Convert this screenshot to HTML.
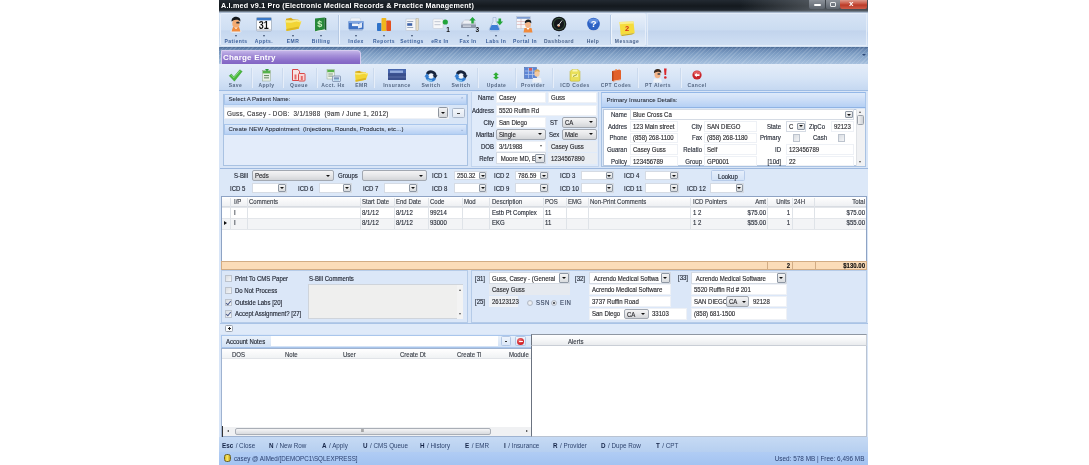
<!DOCTYPE html>
<html>
<head>
<meta charset="utf-8">
<title>A.I.med v9.1 Pro</title>
<style>
*{box-sizing:border-box;margin:0;padding:0}
html,body{width:1089px;height:465px;overflow:hidden;background:#fff}
body{font-family:"Liberation Sans",sans-serif;font-size:6px;color:#222;position:relative;line-height:1}
.a{position:absolute}
.t{position:absolute;white-space:nowrap;line-height:7px;height:7px;color:#2a2f3a;-webkit-text-stroke:.15px;font-size:6.7px;transform:scaleX(.9);transform-origin:0 50%}
.r{text-align:right}
.t.r{transform-origin:100% 50%}
#app{will-change:transform;-webkit-font-smoothing:antialiased;position:absolute;left:219px;top:0;width:649.3px;height:465px;background:#cfdff3;overflow:hidden}
/* title */
#title{left:0;top:0;width:650px;height:12px;border-bottom:1.2px solid #6f7b88;background:linear-gradient(90deg,rgba(0,0,0,0) 80%,rgba(130,136,142,.5) 92%,rgba(120,126,132,.45)),linear-gradient(#232a32,#14191e 55%,#1c232a 88%,#3a4149)}
#title .tt{left:2px;top:1px;color:#fff;font-weight:bold;font-size:7.2px;line-height:9px;height:9px;letter-spacing:.2px;transform:none;-webkit-text-stroke:0}
.wb{position:absolute;top:0;height:9px;border-radius:0 0 2px 2px}
/* main toolbar */
#tb1{left:0;top:12px;width:650px;height:35px;background:linear-gradient(#d9e6f6,#cbdcf1 55%,#c4d6ee 60%,#d3e2f4)}
.lab{position:absolute;white-space:nowrap;font-size:5px;line-height:6px;color:#3b5f9a;font-weight:bold;letter-spacing:.45px;transform:translateX(-50%)}
.lab2{color:#4a638c}
.ic{position:absolute}
.dd{position:absolute;width:0;height:0;border-left:1.8px solid transparent;border-right:1.8px solid transparent;border-top:2.1px solid #3a4c6c;transform:translateX(-50%)}
/* strip */
#strip{left:0;top:46.5px;width:650px;height:17.5px;background:repeating-linear-gradient(135deg,rgba(255,255,255,.13) 0,rgba(255,255,255,.13) 1px,rgba(0,0,0,0) 1px,rgba(0,0,0,0) 3px),linear-gradient(#4a6992,#6888b2 12%,#7e9ec4 40%,#94b1d3 75%,#a7c1de)}
#tab{left:2px;top:50px;width:140px;height:14px;border-radius:1px 4px 0 0;background:linear-gradient(#c2b3e8,#a58fd8 35%,#8b6fca 75%,#8265c3);border:1px solid #d6cbef;border-bottom:none}
#tab span{position:absolute;left:1px;top:1.6px;color:#fff;font-weight:bold;font-size:8px;line-height:10px;letter-spacing:.2px}
/* toolbar 2 */
#tb2{left:0;top:64px;width:650px;height:27px;background:linear-gradient(#e4edf9,#d6e4f6 55%,#c5d8f1);border-bottom:1px solid #9ebce4}
.l2{color:#566883}
.sp{position:absolute;top:4px;width:1px;height:20px;background:#cbdaee;box-shadow:1px 0 0 #e6eef9}
/* panels */
.pn{position:absolute;background:#d9e6f7;border:1px solid #a9c2e2}
.hd{position:absolute;background:linear-gradient(#deeafa,#cbddf7 50%,#b5d0f4);border:1px solid #a9c6ec}
.hdt{font-size:6.05px;transform:none;color:#1c212c;-webkit-text-stroke:.06px}
.in{position:absolute;background:#fff;border:1px solid #eef1f6;height:9px}
.in span,.cb span{position:absolute;left:2px;top:1px;bottom:0;margin:auto 0;height:8px;line-height:8px;white-space:nowrap;color:#2c2c30;-webkit-text-stroke:.15px;font-size:6.7px;transform:scaleX(.9);transform-origin:0 50%}
.cb{position:absolute;background:#fff;border:1px solid #d5dbe4;height:9px}
.cb i{position:absolute;right:0;top:0;bottom:0;margin:auto 0;width:7.5px;height:7.5px;background:linear-gradient(#f4f4f4,#d9dcdf);border:1px solid #8e97a3;border-radius:1px}
.cb i:after{content:"";position:absolute;left:.7px;top:1.7px;border-left:2px solid transparent;border-right:2px solid transparent;border-top:2.4px solid #111}
.cb.big i{width:9.6px;height:9.3px}
.cb.big i:after{left:1.6px;top:2.5px;border-left-width:2.200px;border-right-width:2.200px;border-top-width:2.600px}
.gcb{background:linear-gradient(#f4f4f5,#e6e7e9 50%,#d3d5d8);border:1px solid #a2a8b1;border-radius:2px}
.gcb i:after{top:2.6px}
.gcb i{background:none;border:none}
.ck{position:absolute;width:7.4px;height:7.4px;background:linear-gradient(135deg,#d9dde2,#f4f5f7);border:1px solid #bcc3cd}

.dk{color:#1f2430}
.gh{color:#3a3f48}
.btn{background:linear-gradient(#f6f8fb,#dfe5ee);border:1px solid #93a4bd;border-radius:1.5px}
.btn .arr{position:absolute;left:2.6px;top:3px;border-left:1.6px solid transparent;border-right:1.6px solid transparent;border-top:2px solid #222}
.btn .dash{position:absolute;left:4px;top:3.6px;width:3.5px;height:.9px;background:#444}
.tri{width:0;height:0;border-left:1.9px solid transparent;border-right:1.9px solid transparent;border-top:2.3px solid #555}
.tru{width:0;height:0;border-left:1.9px solid transparent;border-right:1.9px solid transparent;border-bottom:2.3px solid #555}
.ck.on:after{content:"";position:absolute;left:1.2px;top:.2px;width:2px;height:3.6px;border-right:1px solid #4a5a8a;border-bottom:1px solid #4a5a8a;transform:rotate(40deg)}
.rd{position:absolute;width:6.5px;height:6.5px;border-radius:50%;background:radial-gradient(#f4f5f7,#d9dde3);border:1px solid #b4bbc6}
.rd.on:after{content:"";position:absolute;left:1.2px;top:1.2px;width:2.2px;height:2.2px;border-radius:50%;background:#2a2f3a}
.sk{position:absolute;white-space:nowrap;top:5.4px;line-height:7px;font-size:6.7px;transform:scaleX(.94);transform-origin:0 50%;color:#2f446e}
.sk b{color:#152447;margin-right:2.6px}
</style>
</head>
<body>
<div id="app">
<!-- TITLE BAR -->
<div id="title" class="a">
  <div class="t tt">A.I.med v9.1 Pro (Electronic Medical Records &amp; Practice Management)</div>
  <div class="wb" style="left:590px;width:16px;background:linear-gradient(#8b9199,#5d646d)"><div class="a" style="left:5px;top:4px;width:7px;height:2px;background:#fff;border-radius:1px"></div></div>
  <div class="wb" style="left:606px;width:15px;background:linear-gradient(#8b9199,#5d646d);border-left:1px solid #3e444b"><div class="a" style="left:4px;top:2px;width:6px;height:5px;border:1.4px solid #e8eaec;border-radius:1px"></div></div>
  <div class="wb" style="left:621px;width:27px;background:linear-gradient(#dc9a8c,#c8513e 45%,#b93a28 55%,#cf5d49)"><div class="a" style="left:9px;top:-1px;color:#fff;font-weight:bold;font-size:8px;line-height:10px">x</div></div>
</div>
<!-- MAIN TOOLBAR -->
<div id="tb1" class="a">
  <div class="a" style="left:0;top:0;width:650px;height:1.2px;background:#a9b8cd;z-index:2"></div>
  <div class="a" style="left:1px;top:1px;width:426px;height:33px;border:1px solid #e6eefa;border-radius:2px;background:linear-gradient(#dbe7f7,#cfdff3 50%,#c5d7ef 55%,#d2e1f4)"></div>
  <div class="a" style="left:428px;top:1px;width:220px;height:33px;border:1px solid #e3ecf8;background:linear-gradient(#d6e3f5,#cbdcf1 50%,#c2d4ed 55%,#cfdff3)"></div>
  <div class="a" style="left:119px;top:3px;width:1px;height:29px;background:#b5c9e4;box-shadow:1px 0 0 #eef4fc"></div>
  <div class="a" style="left:391px;top:3px;width:1px;height:29px;background:#b5c9e4;box-shadow:1px 0 0 #eef4fc"></div>
  <!-- Patients -->
  <svg class="ic" style="left:9px;top:4px" width="16" height="17" viewBox="0 0 16 17"><ellipse cx="8" cy="15.2" rx="5.5" ry="1.6" fill="#e9eef5"/><path d="M5 11h6l1.5 4.5h-9z" fill="#f08a3c"/><path d="M6.2 11l1.8 2.2L9.8 11z" fill="#fff"/><ellipse cx="8" cy="7.400" rx="3.700" ry="4.400" fill="#f3ab72"/><path d="M3.6 5.6C3.2 2 6 .6 8.4.8c2.6.2 4.4 1.800 4 4.600-1.400-1.400-3-1.800-4.400-1.600C6.400 4 4.600 4.600 3.600 5.600z" fill="#15181c"/><rect x="8.300" y="5.800" width="3.200" height="1.600" rx=".5" fill="#2a2e36"/></svg>
  <div class="dd" style="left:17px;top:22.9px"></div><div class="lab" style="left:17px;top:26px">Patients</div>
  <!-- Appts -->
  <svg class="ic" style="left:37px;top:5px" width="16" height="15" viewBox="0 0 16 15"><rect x=".5" y=".5" width="15" height="13.500" rx="1" fill="#fdfdfd" stroke="#8c98aa" stroke-width=".6"/><rect x=".8" y=".8" width="14.400" height="2.600" fill="#3b79c8"/><rect x=".8" y="12.200" width="14.400" height="1.500" fill="#c9ced6"/><text x="7.800" y="11.800" font-family="Liberation Sans" font-weight="bold" font-size="10.500" text-anchor="middle" fill="#111" textLength="10" lengthAdjust="spacingAndGlyphs">31</text></svg>
  <div class="dd" style="left:45px;top:22.9px"></div><div class="lab" style="left:45px;top:26px">Appts.</div>
  <!-- EMR -->
  <svg class="ic" style="left:66px;top:5px" width="17" height="15" viewBox="0 0 17 15"><path d="M1 1.800l5-1 2 1.400 5.500.6v3H1z" fill="#d9ab1c"/><path d="M.6 3.200l6 .3 5.500-.8 4.300 1.700-2.600 7.300L1.500 14z" fill="#f2d535"/><path d="M.6 3.200l6 .3 5.500-.8 4.300 1.700-.8 1.200-4-1-5.500 1.200-5.300-.3z" fill="#f8ea80"/><path d="M1.300 12l12.500-2.600-.1 2.300L1.500 14z" fill="#dcb622"/></svg>
  <div class="dd" style="left:74px;top:22.9px"></div><div class="lab" style="left:74px;top:26px">EMR</div>
  <!-- Billing -->
  <svg class="ic" style="left:94px;top:5px" width="15" height="15" viewBox="0 0 15 15"><path d="M2 1.500l9.500-1v12l-9.500 1.800z" fill="#27883a"/><path d="M11.500.5l1.800.8v12l-1.800-.8z" fill="#185a25"/><path d="M2 14.300l9.500-1.800 1.800.8-9.700 1.500z" fill="#e9efe9"/><text x="6.800" y="10.300" font-family="Liberation Sans" font-weight="bold" font-size="9" text-anchor="middle" fill="#c6f0bd">$</text></svg>
  <div class="dd" style="left:102px;top:22.9px"></div><div class="lab" style="left:102px;top:26px">Billing</div>
  <!-- Index -->
  <svg class="ic" style="left:128px;top:5px" width="18" height="15" viewBox="0 0 18 15"><path d="M4 1h9l1 3H3z" fill="#eef2f8" stroke="#b9c4d4" stroke-width=".4"/><rect x="1.500" y="4" width="15" height="8.500" rx="1" fill="#3f72c4"/><rect x="1.500" y="4" width="15" height="2" fill="#7fa5e0"/><rect x="5" y="6.500" width="6" height="2.600" fill="#f3f6fb"/><path d="M11 7l4-1.500v5l-4 1z" fill="#dfe8f6"/><rect x="2.500" y="12.500" width="13" height="1.200" fill="#9fb4d4"/></svg>
  <div class="dd" style="left:137px;top:22.9px"></div><div class="lab" style="left:137px;top:26px">Index</div>
  <!-- Reports -->
  <svg class="ic" style="left:157px;top:4px" width="16" height="16" viewBox="0 0 16 16"><rect x="1" y="7" width="4.500" height="8" rx=".8" fill="#2f73c9"/><rect x="5.500" y="2" width="4.800" height="13" rx=".8" fill="#f0b61c"/><rect x="10.300" y="4.500" width="4.700" height="10.500" rx=".8" fill="#e4511f"/></svg>
  <div class="dd" style="left:165px;top:22.9px"></div><div class="lab" style="left:165px;top:26px">Reports</div>
  <!-- Settings -->
  <svg class="ic" style="left:185px;top:5px" width="16" height="15" viewBox="0 0 16 15"><rect x="2" y="2" width="10" height="11.500" fill="#f4f6f9" stroke="#b1bac8" stroke-width=".5"/><rect x="3.200" y="4" width="6" height="1" fill="#9aa8bd"/><rect x="3.200" y="6.200" width="5" height="2.600" fill="#3d62a8"/><rect x="3.200" y="10" width="6" height="1" fill="#9aa8bd"/><path d="M12 1.500h2.500v11l-1.200 1.500-1.300-1.500z" fill="#e8dfc9" stroke="#a59c86" stroke-width=".4"/></svg>
  <div class="dd" style="left:193px;top:22.9px"></div><div class="lab" style="left:193px;top:26px">Settings</div>
  <!-- eRx In -->
  <svg class="ic" style="left:212px;top:5px" width="20" height="16" viewBox="0 0 20 16"><rect x="2" y="2" width="10" height="9.500" rx="1" fill="#f6f7f9" stroke="#bcc3cf" stroke-width=".5"/><rect x="3.500" y="4" width="6" height="1.200" fill="#c9ced8"/><rect x="3.500" y="7" width="6" height="1.200" fill="#c9ced8"/><circle cx="14.300" cy="5" r="2.600" fill="#22a53a"/><text x="17" y="15" font-family="Liberation Sans" font-weight="bold" font-size="6.500" text-anchor="middle" fill="#111">1</text></svg>
  <div class="lab" style="left:221px;top:26px">eRx In</div>
  <!-- Fax In -->
  <svg class="ic" style="left:240px;top:4px" width="21" height="17" viewBox="0 0 21 17"><path d="M2 7l4-3.500h8l3 3.500v4.500H2z" fill="#c4cad6"/><path d="M5 4.500h8l1.500 3H3.800z" fill="#eef0f5"/><rect x="2" y="8.500" width="15" height="3.600" rx=".8" fill="#8e98ab"/><rect x="4" y="9.500" width="8" height="1.200" fill="#dfe3eb"/><path d="M13.500 1l3.200 3.600h-2v3h-2.400v-3h-2z" fill="#22a53a"/><text x="18.300" y="16.300" font-family="Liberation Sans" font-weight="bold" font-size="6.500" text-anchor="middle" fill="#111">3</text></svg>
  <div class="dd" style="left:249px;top:22.9px"></div><div class="lab" style="left:249px;top:26px">Fax In</div>
  <!-- Labs In -->
  <svg class="ic" style="left:268px;top:4px" width="18" height="17" viewBox="0 0 18 17"><path d="M6 1.500h3v4l3.600 7.300c.5 1.200-.2 2.200-1.500 2.200H3.900c-1.300 0-2-1-1.500-2.200L6 5.500z" fill="#dfe9f8" stroke="#8fa6cb" stroke-width=".5"/><path d="M4.600 9h5.800l1.800 3.800c.3.800-.1 1.400-.9 1.400H3.700c-.8 0-1.200-.6-.9-1.400z" fill="#3f7fd6"/><path d="M11.500 2.500h2.600v3h2l-3.300 3.800-3.300-3.800h2z" fill="#22a53a"/></svg>
  <div class="dd" style="left:277px;top:22.9px"></div><div class="lab" style="left:277px;top:26px">Labs In</div>
  <!-- Portal In -->
  <svg class="ic" style="left:297px;top:4px" width="18" height="17" viewBox="0 0 18 17"><rect x=".5" y=".5" width="14" height="12" fill="#f4f6fa" stroke="#b6c0d0" stroke-width=".5"/><rect x=".8" y=".8" width="13.400" height="2" fill="#7d9cd2"/><path d="M.8 5.500h13.400M.8 8.500h13.400M5 3v9.500" stroke="#d89a9a" stroke-width=".5"/><path d="M8.500 12h7l1 4.500h-9z" fill="#f08a3c"/><path d="M10.500 12l1.500 2 1.500-2z" fill="#fff"/><ellipse cx="12" cy="8.600" rx="2.900" ry="3.500" fill="#f3b488"/><path d="M8.800 7.400c-.3-3 1.800-4 3.600-3.900 2 .1 3.200 1.500 2.900 3.700-1-1-2.200-1.400-3.200-1.300-1.200.1-2.500.7-3.300 1.500z" fill="#15181c"/></svg>
  <div class="dd" style="left:306px;top:22.9px"></div><div class="lab" style="left:306px;top:26px">Portal In</div>
  <!-- Dashboard -->
  <svg class="ic" style="left:332px;top:4px" width="16" height="16" viewBox="0 0 16 16"><circle cx="8" cy="8" r="7.300" fill="#14171a"/><circle cx="8" cy="8" r="5.600" fill="none" stroke="#3a5a3e" stroke-width=".9"/><path d="M8 8.500l3-4" stroke="#e9e9e9" stroke-width=".9"/><circle cx="7.600" cy="9.300" r="1.300" fill="#e8e2da"/><circle cx="7.800" cy="10.200" r=".7" fill="#e0662a"/></svg>
  <div class="dd" style="left:340px;top:22.9px"></div><div class="lab lab2" style="left:340px;top:26px">Dashboard</div>
  <!-- Help -->
  <svg class="ic" style="left:367px;top:5px" width="15" height="15" viewBox="0 0 15 15"><ellipse cx="7.500" cy="13.200" rx="5" ry="1.200" fill="#c9d6ea"/><circle cx="7.500" cy="7" r="6.300" fill="#2f63c4"/><ellipse cx="7.500" cy="4.300" rx="4.600" ry="2.800" fill="#6f9ae6" opacity=".8"/><text x="7.600" y="10.400" font-family="Liberation Sans" font-weight="bold" font-size="9.500" text-anchor="middle" fill="#fff">?</text></svg>
  <div class="lab lab2" style="left:374px;top:26px">Help</div>
  <!-- Message -->
  <div class="a" style="left:393px;top:2px;width:33px;height:31px;background:linear-gradient(rgba(255,255,255,.35),rgba(255,255,255,.12) 50%,rgba(255,255,255,.3))"></div><svg class="ic" style="left:399px;top:8.5px" width="18" height="16" viewBox="0 0 18 16"><path d="M1.500 1l14-.5 1.200 11.500-14 2z" fill="#f5dc3c"/><path d="M1.500 1l14-.5.200 2L1.700 3.300z" fill="#fbee8a"/><path d="M2.700 14l14-2-2.500 1.500-10 1.500z" fill="#c9a91a"/><text x="9" y="10" font-family="Liberation Sans" font-weight="bold" font-size="7.500" text-anchor="middle" fill="#d42a1a">2</text></svg>
  <div class="lab lab2" style="left:408px;top:26px">Message</div>
</div>
<!-- STRIP + TAB -->
<div id="strip" class="a"></div>
<div id="tab" class="a"><span>Charge Entry</span></div>
<div class="a" style="left:642.5px;top:53.5px;width:0;height:0;border-left:2px solid transparent;border-right:2px solid transparent;border-top:2px solid #2f4a7a"></div>
<!-- TOOLBAR 2 -->
<div id="tb2" class="a">
  <div class="sp" style="left:32px"></div><div class="sp" style="left:63px"></div><div class="sp" style="left:97px"></div><div class="sp" style="left:154px"></div><div class="sp" style="left:258px"></div><div class="sp" style="left:296px"></div><div class="sp" style="left:333px"></div><div class="sp" style="left:418px"></div><div class="sp" style="left:461px"></div>
  <!-- Save -->
  <svg class="ic" style="left:9px;top:5px" width="15" height="13" viewBox="0 0 15 13"><path d="M1.200 6.800l2.200-1.800 2.400 2.800L11.800.8l2.400 1.600-7.800 9.800z" fill="#49b83c" stroke="#2f9428" stroke-width=".4"/><path d="M3.300 6l2.500 2.700L11.900 1.800" stroke="#a5e79c" stroke-width=".7" fill="none"/></svg>
  <div class="lab l2" style="left:16.500px;top:18px">Save</div>
  <!-- Apply -->
  <svg class="ic" style="left:41px;top:4px" width="13" height="14" viewBox="0 0 13 14"><rect x="2.500" y="2.500" width="8" height="10.500" fill="#e9efe6" stroke="#8fa58a" stroke-width=".5"/><rect x="2.800" y="2.800" width="7.400" height="2.600" fill="#57b24a"/><rect x="4" y="7" width="5" height="1.100" fill="#6c8f66"/><rect x="4" y="9.300" width="5" height="1.100" fill="#6c8f66"/><path d="M5 1l2 2.500L9 1z" fill="#2f9a3c"/></svg>
  <div class="lab l2" style="left:47.500px;top:18px">Apply</div>
  <!-- Queue -->
  <svg class="ic" style="left:72px;top:4px" width="16" height="14" viewBox="0 0 16 14"><path d="M1.500 1.500h5.500l1.500 1.800v9.200h-7z" fill="#f7e4e4" stroke="#d94848" stroke-width="1"/><rect x="7.500" y="5.500" width="6.500" height="7.500" rx=".8" fill="#f7d6d6" stroke="#d94848" stroke-width="1"/><rect x="3.500" y="6.500" width="2" height="5" fill="#e46a6a"/><rect x="9.800" y="8" width="2" height="4" fill="#e46a6a"/></svg>
  <div class="lab l2" style="left:80px;top:18px">Queue</div>
  <!-- Acct Hx -->
  <svg class="ic" style="left:106px;top:4px" width="17" height="15" viewBox="0 0 17 15"><rect x="2" y="1.500" width="7.500" height="9.500" fill="#eef3ec" stroke="#93a78f" stroke-width=".5"/><rect x="2.300" y="1.800" width="6.900" height="2.400" fill="#57b24a"/><rect x="3.300" y="5.500" width="4.600" height="1" fill="#809a7b"/><rect x="3.300" y="7.600" width="4.600" height="1" fill="#809a7b"/><rect x="7.500" y="8" width="8" height="5.500" rx=".6" fill="#d7e2f2" stroke="#5f7599" stroke-width=".6"/><rect x="9" y="9.600" width="5" height="1" fill="#3f5f96"/><rect x="9" y="11.300" width="5" height="1" fill="#7fb9d9"/></svg>
  <div class="lab l2" style="left:114px;top:18px">Acct. Hx</div>
  <!-- EMR -->
  <svg class="ic" style="left:135px;top:5.500px" width="15" height="12.500" viewBox="0 0 17 15"><path d="M1 1.800l5-1 2 1.400 5.500.6v3H1z" fill="#d9ab1c"/><path d="M.6 3.200l6 .3 5.500-.8 4.300 1.700-2.600 7.300L1.500 14z" fill="#f2d535"/><path d="M.6 3.200l6 .3 5.500-.8 4.300 1.700-.8 1.200-4-1-5.500 1.200-5.300-.3z" fill="#f8ea80"/><path d="M1.300 12l12.500-2.600-.1 2.300L1.500 14z" fill="#dcb622"/></svg>
  <div class="lab l2" style="left:142.500px;top:18px">EMR</div>
  <!-- Insurance -->
  <svg class="ic" style="left:169px;top:5px" width="18" height="11" viewBox="0 0 18 11"><rect x="0" y="0" width="18" height="11" rx=".6" fill="#3a4f8c"/><rect x="0" y="0" width="18" height="4.200" fill="#4766ad"/><rect x="2" y="1.500" width="13" height="2.400" fill="#9fb6e3" opacity=".9"/><rect x="0" y="7.500" width="18" height="1" fill="#5b6fa6"/></svg>
  <div class="lab l2" style="left:178px;top:18px">Insurance</div>
  <!-- Switch x2 -->
  <svg class="ic" style="left:205px;top:4.5px" width="14" height="14" viewBox="0 0 14 14"><circle cx="7" cy="7" r="2.2" fill="#f4f7fb"/><path d="M3.2 5.200A4.200 4.200 0 0 1 11.200 6.800" fill="none" stroke="#16233c" stroke-width="2.800"/><path d="M8.600 6.300h5l-2.500 3.500z" fill="#16233c"/><path d="M10.800 8.800A4.200 4.200 0 0 1 2.800 7.200" fill="none" stroke="#2f7bd0" stroke-width="2.800"/><path d="M.4 7.700h5L2.900 4.200z" fill="#2f7bd0"/><path d="M3.500 10.500A4.200 4.200 0 0 0 8 11.600" fill="none" stroke="#7cc0ee" stroke-width="1.600"/></svg>
  <div class="lab l2" style="left:212px;top:18px">Switch</div>
  <svg class="ic" style="left:234.5px;top:4.5px" width="14" height="14" viewBox="0 0 14 14"><circle cx="7" cy="7" r="2.2" fill="#f4f7fb"/><path d="M3.2 5.200A4.200 4.200 0 0 1 11.200 6.800" fill="none" stroke="#16233c" stroke-width="2.800"/><path d="M8.600 6.300h5l-2.500 3.500z" fill="#16233c"/><path d="M10.800 8.800A4.200 4.200 0 0 1 2.800 7.200" fill="none" stroke="#2f7bd0" stroke-width="2.800"/><path d="M.4 7.700h5L2.900 4.200z" fill="#2f7bd0"/><path d="M3.500 10.500A4.200 4.200 0 0 0 8 11.600" fill="none" stroke="#7cc0ee" stroke-width="1.600"/></svg>
  <div class="lab l2" style="left:242px;top:18px">Switch</div>
  <!-- Update -->
  <svg class="ic" style="left:273.400px;top:7.500px" width="8" height="8" viewBox="0 0 11 11"><path d="M5.500.5l4 3.600H7.200v2.800h2.300l-4 3.600-4-3.600h2.300V4.100H1.500z" fill="#2fae35"/></svg>
  <div class="lab l2" style="left:277.500px;top:18px">Update</div>
  <!-- Provider -->
  <svg class="ic" style="left:305px;top:3px" width="18" height="16" viewBox="0 0 18 16"><rect x=".5" y=".5" width="12" height="11" fill="#5d86d6" stroke="#3c5fa6" stroke-width=".5"/><path d="M.8 4h11.400M.8 7.500h11.400M4.500.8v10.400M8.500.8v10.400" stroke="#b9ccef" stroke-width=".7"/><rect x="5" y="1" width="3" height="2.600" fill="#d35a5a"/><ellipse cx="13" cy="6.500" rx="2.600" ry="3.200" fill="#f3c9a0"/><path d="M9 11h8l.8 4.500h-9.600z" fill="#eef1f6"/><path d="M10.400 5.500c0-2.600 1.600-3.300 3-3.200 1.500.1 2.600 1.200 2.300 3-.8-.8-1.800-1.100-2.600-1-1 .1-2 .6-2.700 1.200z" fill="#d9a85c"/></svg>
  <div class="lab l2" style="left:314px;top:18px">Provider</div>
  <!-- ICD -->
  <svg class="ic" style="left:349px;top:4px" width="14" height="14" viewBox="0 0 14 14"><path d="M2 3.500l2-2h6l2 2v8.500c0 .8-.5 1.200-1.200 1.200H3.200c-.7 0-1.200-.4-1.200-1.200z" fill="#e9e05a" stroke="#b9ad2a" stroke-width=".5"/><path d="M4.500 1.500h5v2h-5z" fill="#fbf6b0"/><rect x="4" y="6" width="6" height="3" fill="#f8f3a0"/><path d="M5 8.500l4-2" stroke="#7f8a2a" stroke-width=".8"/></svg>
  <div class="lab l2" style="left:356px;top:18px">ICD Codes</div>
  <!-- CPT -->
  <svg class="ic" style="left:391px;top:4px" width="13" height="14" viewBox="0 0 13 14"><path d="M2 3l7.500-1.500 1.500 1v9.500l-7.500 1.500-1.500-1z" fill="#e2602a"/><path d="M2 3l1.500 1v9.500l-1.500-1z" fill="#b94418"/><path d="M5 1l2 .3-.5 2z" fill="#f08a3c"/><path d="M3.500 13.500l7.500-1.500-.3-.6-7.200 1.400z" fill="#f5e9e0"/></svg>
  <div class="lab l2" style="left:397px;top:18px">CPT Codes</div>
  <!-- PT Alerts -->
  <svg class="ic" style="left:432px;top:3px" width="18" height="16" viewBox="0 0 18 16"><path d="M3 11.500h7l1 4H2z" fill="#eef1f6"/><ellipse cx="6.500" cy="7.500" rx="3" ry="3.800" fill="#f3b488"/><path d="M3 6.300c-.3-3.300 2-4.300 4-4.200 2.200.1 3.600 1.600 3.300 4-1.200-1.100-2.500-1.500-3.700-1.400-1.300.1-2.700.7-3.600 1.600z" fill="#3a2a1e"/><rect x="6.500" y="6.300" width="2.800" height="1.400" rx=".4" fill="#3a3e46"/><path d="M13 1.500h2.600l-.5 6.500h-1.600z" fill="#d9262a"/><circle cx="14.300" cy="10.500" r="1.300" fill="#d9262a"/></svg>
  <div class="lab l2" style="left:439px;top:18px">PT Alerts</div>
  <!-- Cancel -->
  <svg class="ic" style="left:473px;top:6.400px" width="10" height="10" viewBox="0 0 13 13"><circle cx="6.500" cy="6.500" r="6" fill="#c8242a"/><ellipse cx="6.500" cy="4" rx="4.500" ry="2.600" fill="#e8696c" opacity=".8"/><path d="M3 6.600l3.200-2.800v1.700h3.600v2.300H6.200v1.700z" fill="#fff"/></svg>
  <div class="lab l2" style="left:478px;top:18px">Cancel</div>
</div>
<!-- BODY -->
<div id="body">
<div class="a " style="left:0px;top:91px;width:650px;height:346px;background:#d8e5f7"></div>
<div class="a pn" style="left:3.5px;top:93.5px;width:245px;height:72.5px;"></div>
<div class="a hd" style="left:4.5px;top:93.8px;width:243px;height:11.4px;"></div>
<div class="t hdt" style="left:9.5px;top:96.3px;">Select A Patient Name:</div>
<div class="t " style="left:241px;top:96.3px;font-size:5px;color:#7f9ac4;transform:none;-webkit-text-stroke:0">&#8963;</div>
<div class="in" style="left:5px;top:106.600px;width:225px;height:12px"><span style="font-size:6.300px;line-height:10px;letter-spacing:.3px;color:#3a3a3e;transform:none">Guss, Casey - DOB:&nbsp; 3/1/1988&nbsp; (9am / June 1, 2012)</span></div>
<div class="a btn" style="left:219.3px;top:107.4px;width:9.5px;height:10.2px;background:linear-gradient(#f3f3f4,#d6d8db);border-color:#8f959e"><b class="arr" style="left:2px;top:3.400px;border-left-width:2.200px;border-right-width:2.200px;border-top-width:2.600px;border-top-color:#111"></b></div>
<div class="a btn" style="left:232.6px;top:107.6px;width:13.4px;height:10px;background:linear-gradient(#f4f7fb,#e1e8f2);border-color:#a9b6c9"><b class="dash" style="left:4.200px;top:4px"></b></div>
<div class="a hd" style="left:4.5px;top:123.6px;width:243px;height:11.2px;"></div>
<div class="t hdt" style="left:9.5px;top:126px;letter-spacing:.08px">Create NEW Appointment&nbsp; (Injections, Rounds, Products, etc...)</div>
<div class="t " style="left:241px;top:126px;font-size:5px;color:#7f9ac4;transform:none;-webkit-text-stroke:0">&#8964;</div>
<div class="a " style="left:4.5px;top:134.8px;width:243px;height:30.2px;background:#e3ecfa"></div>
<div class="a " style="left:251.5px;top:91.5px;width:128px;height:75px;background:#e0ebfa;border:1px solid #c3d5ee;border-top:none"></div>
<div class="t r dk" style="left:175px;top:94.2px;width:100px;">Name</div>
<div class="t r dk" style="left:175px;top:106.7px;width:100px;">Address</div>
<div class="t r dk" style="left:175px;top:118.8px;width:100px;">City</div>
<div class="t r dk" style="left:175px;top:130.8px;width:100px;">Marital</div>
<div class="t r dk" style="left:175px;top:142.8px;width:100px;">DOB</div>
<div class="t r dk" style="left:175px;top:154.8px;width:100px;">Refer</div>
<div class="in" style="left:277px;top:92px;width:49.6px;height:11.4px;"><span>Casey</span></div>
<div class="in" style="left:329px;top:92px;width:49px;height:11.4px;"><span>Guss</span></div>
<div class="in" style="left:277px;top:104.5px;width:101px;height:11.4px;"><span>5520 Ruffin Rd</span></div>
<div class="in" style="left:277px;top:116.6px;width:49.6px;height:11.4px;"><span>San Diego</span></div>
<div class="t dk" style="left:330.5px;top:118.8px;">ST</div>
<div class="cb gcb" style="left:343px;top:116.9px;width:35px;height:10.8px;"><span>CA</span><i></i></div>
<div class="cb gcb" style="left:277px;top:128.9px;width:49.6px;height:10.8px;"><span>Single</span><i></i></div>
<div class="t dk" style="left:329.5px;top:130.8px;">Sex</div>
<div class="cb gcb" style="left:343px;top:128.9px;width:35px;height:10.8px;"><span>Male</span><i></i></div>
<div class="in" style="left:277px;top:140.6px;width:49.6px;height:11.4px;"><span>3/1/1988</span></div>
<div class="a tri" style="left:321px;top:145.3px"></div>
<div class="in" style="left:329px;top:140.6px;width:49px;height:11.4px;background:#e9edf2;border-color:#e9edf2"><span>Casey Guss</span></div>
<div class="cb big" style="left:277px;top:152.4px;width:49.6px;height:11.8px;"><span>&nbsp;Moore MD, E</span><i></i></div>
<div class="in" style="left:329px;top:152.6px;width:49px;height:11.4px;background:#e9edf2;border-color:#e9edf2"><span>1234567890</span></div>
<div class="a pn" style="left:381.5px;top:91.5px;width:265.5px;height:75px;"></div>
<div class="a hd" style="left:381.5px;top:91.5px;width:265.5px;height:16px;border-top:1.300px solid #94b8e8;border-bottom:1.300px solid #8fb3e4"></div>
<div class="t hdt" style="left:387.5px;top:96.9px;">Primary Insurance Details:</div>
<div class="a " style="left:384px;top:108.5px;width:262px;height:57.5px;background:#fff;border:1px solid #b9c9df"></div>
<div class="a " style="left:637px;top:109px;width:8.5px;height:56.5px;background:#f0f1f3;border-left:1px solid #dfe2e6"></div>
<div class="a " style="left:638px;top:115px;width:6.5px;height:10px;background:linear-gradient(90deg,#f3f3f4,#cfd2d6);border:1px solid #9aa0a8;border-radius:1.5px"></div>
<div class="a tru" style="left:639.7px;top:111px"></div>
<div class="a tri" style="left:639.7px;top:161px"></div>
<div class="t r " style="left:308px;top:111.2px;width:100px;">Name</div>
<div class="t r " style="left:308px;top:122.8px;width:100px;">Addres</div>
<div class="t r " style="left:308px;top:134.4px;width:100px;">Phone</div>
<div class="t r " style="left:308px;top:146px;width:100px;">Guaran</div>
<div class="t r " style="left:308px;top:157.6px;width:100px;">Policy</div>
<div class="cb " style="left:411px;top:109.4px;width:223.5px;height:10.6px;"><span>Blue Cross Ca</span><i></i></div>
<div class="in" style="left:411px;top:121px;width:48px;height:10.6px;"><span>123 Main street</span></div>
<div class="t r " style="left:382.5px;top:122.8px;width:100px;">City</div>
<div class="in" style="left:485px;top:121px;width:53px;height:10.6px;"><span>SAN DIEGO</span></div>
<div class="t r " style="left:462px;top:122.8px;width:100px;">State</div>
<div class="cb " style="left:566.5px;top:121px;width:20px;height:10.6px;"><span>C</span><i></i></div>
<div class="t " style="left:590px;top:122.8px;">ZipCo</div>
<div class="in" style="left:611.5px;top:121px;width:23px;height:10.6px;"><span>92123</span></div>
<div class="in" style="left:411px;top:132.6px;width:48px;height:10.6px;"><span>(858) 268-1100</span></div>
<div class="t r " style="left:382.5px;top:134.4px;width:100px;">Fax</div>
<div class="in" style="left:485px;top:132.6px;width:53px;height:10.6px;"><span>(858) 268-1180</span></div>
<div class="t " style="left:541px;top:134.4px;">Primary</div>
<div class="ck" style="left:574px;top:134.4px"></div>
<div class="t " style="left:594px;top:134.4px;">Cash</div>
<div class="ck" style="left:619px;top:134.4px"></div>
<div class="in" style="left:411px;top:144.2px;width:48px;height:10.6px;"><span>Casey Guss</span></div>
<div class="t r " style="left:382.5px;top:146px;width:100px;">Relatio</div>
<div class="in" style="left:485px;top:144.2px;width:53px;height:10.6px;"><span>Self</span></div>
<div class="t r " style="left:462px;top:146px;width:100px;">ID</div>
<div class="in" style="left:566.5px;top:144.2px;width:68px;height:10.6px;"><span>123456789</span></div>
<div class="in" style="left:411px;top:155.8px;width:48px;height:10.6px;"><span>123456789</span></div>
<div class="t r " style="left:382.5px;top:157.6px;width:100px;">Group</div>
<div class="in" style="left:485px;top:155.8px;width:53px;height:10.6px;"><span>GP0001</span></div>
<div class="t r " style="left:462px;top:157.6px;width:100px;">[10d]</div>
<div class="in" style="left:566.5px;top:155.8px;width:68px;height:10.6px;"><span>22</span></div>
<div class="a " style="left:1px;top:167.5px;width:648px;height:28px;background:#dce8f8;border-top:1px solid #9db8de"></div>
<div class="t r dk" style="left:-71px;top:172.2px;width:100px;">S-Bill</div>
<div class="cb gcb" style="left:33px;top:170.3px;width:81.5px;height:10.8px;"><span>Peds</span><i></i></div>
<div class="t dk" style="left:119px;top:172.2px;">Groups</div>
<div class="cb gcb" style="left:142.5px;top:170.3px;width:65px;height:10.8px;"><span></span><i></i></div>
<div class="t dk" style="left:213px;top:172.2px;">ICD 1</div>
<div class="cb " style="left:234.7px;top:170.95px;width:33.8px;height:9.5px;"><span>250.32</span><i></i></div>
<div class="t dk" style="left:274.7px;top:172.2px;">ICD 2</div>
<div class="cb " style="left:295.7px;top:170.95px;width:34px;height:9.5px;"><span>786.59</span><i></i></div>
<div class="t dk" style="left:340.5px;top:172.2px;">ICD 3</div>
<div class="cb " style="left:361.7px;top:170.95px;width:33.6px;height:9.5px;"><span></span><i></i></div>
<div class="t dk" style="left:405px;top:172.2px;">ICD 4</div>
<div class="cb " style="left:426px;top:170.95px;width:33.7px;height:9.5px;"><span></span><i></i></div>
<div class="a btn" style="left:491.7px;top:170px;width:33.9px;height:10.8px;background:linear-gradient(#e6effb,#d4e3f7);border-color:#b7cbe9"><span class="t dk" style="left:0;top:1.6px;width:100%;text-align:center;transform-origin:50% 50%">Lookup</span></div>
<div class="t dk" style="left:11px;top:184.5px;">ICD 5</div>
<div class="cb " style="left:33px;top:183.25px;width:34.5px;height:9.5px;"><span></span><i></i></div>
<div class="t dk" style="left:78.5px;top:184.5px;">ICD 6</div>
<div class="cb " style="left:100.4px;top:183.25px;width:32.6px;height:9.5px;"><span></span><i></i></div>
<div class="t dk" style="left:143.5px;top:184.5px;">ICD 7</div>
<div class="cb " style="left:165.4px;top:183.25px;width:33.6px;height:9.5px;"><span></span><i></i></div>
<div class="t dk" style="left:213px;top:184.5px;">ICD 8</div>
<div class="cb " style="left:234.7px;top:183.25px;width:33.8px;height:9.5px;"><span></span><i></i></div>
<div class="t dk" style="left:274.7px;top:184.5px;">ICD 9</div>
<div class="cb " style="left:295.7px;top:183.25px;width:34px;height:9.5px;"><span></span><i></i></div>
<div class="t dk" style="left:340.5px;top:184.5px;">ICD 10</div>
<div class="cb " style="left:361.7px;top:183.25px;width:33.6px;height:9.5px;"><span></span><i></i></div>
<div class="t dk" style="left:405px;top:184.5px;">ICD 11</div>
<div class="cb " style="left:426px;top:183.25px;width:33.7px;height:9.5px;"><span></span><i></i></div>
<div class="t dk" style="left:467.8px;top:184.5px;">ICD 12</div>
<div class="cb " style="left:491px;top:183.25px;width:34.3px;height:9.5px;"><span></span><i></i></div>
<div class="a " style="left:1.5px;top:195.5px;width:646.2px;height:66px;background:#fff;border:1px solid #8ea3c4;border-bottom:none"></div>
<div class="a " style="left:3px;top:197.5px;width:644px;height:9px;background:linear-gradient(#fdfdfd,#eef0f3);border-bottom:1px solid #d8dce2"></div>
<div class="a " style="left:3px;top:218px;width:644px;height:11px;background:#f3f4f6"></div>
<div class="a " style="left:3px;top:207px;width:644px;height:0.6px;background:#e3e6ea"></div>
<div class="a " style="left:3px;top:217.7px;width:644px;height:0.6px;background:#e3e6ea"></div>
<div class="a " style="left:3px;top:228.7px;width:644px;height:0.6px;background:#e3e6ea"></div>
<div class="a " style="left:11.3px;top:198px;width:0.6px;height:31px;background:#dfe3e8"></div>
<div class="a " style="left:28px;top:198px;width:0.6px;height:31px;background:#dfe3e8"></div>
<div class="a " style="left:141px;top:198px;width:0.6px;height:31px;background:#dfe3e8"></div>
<div class="a " style="left:174.8px;top:198px;width:0.6px;height:31px;background:#dfe3e8"></div>
<div class="a " style="left:208.8px;top:198px;width:0.6px;height:31px;background:#dfe3e8"></div>
<div class="a " style="left:242.6px;top:198px;width:0.6px;height:31px;background:#dfe3e8"></div>
<div class="a " style="left:270px;top:198px;width:0.6px;height:31px;background:#dfe3e8"></div>
<div class="a " style="left:324px;top:198px;width:0.6px;height:31px;background:#dfe3e8"></div>
<div class="a " style="left:346.6px;top:198px;width:0.6px;height:31px;background:#dfe3e8"></div>
<div class="a " style="left:368.8px;top:198px;width:0.6px;height:31px;background:#dfe3e8"></div>
<div class="a " style="left:471px;top:198px;width:0.6px;height:31px;background:#dfe3e8"></div>
<div class="a " style="left:547.6px;top:198px;width:0.6px;height:31px;background:#dfe3e8"></div>
<div class="a " style="left:572.6px;top:198px;width:0.6px;height:31px;background:#dfe3e8"></div>
<div class="a " style="left:595.4px;top:198px;width:0.6px;height:31px;background:#dfe3e8"></div>
<div class="t gh" style="left:15.4px;top:198.4px;">I/P</div>
<div class="t gh" style="left:30px;top:198.4px;">Comments</div>
<div class="t gh" style="left:143px;top:198.4px;">Start Date</div>
<div class="t gh" style="left:177px;top:198.4px;">End Date</div>
<div class="t gh" style="left:210.7px;top:198.4px;">Code</div>
<div class="t gh" style="left:244.8px;top:198.4px;">Mod</div>
<div class="t gh" style="left:273px;top:198.4px;">Description</div>
<div class="t gh" style="left:325.7px;top:198.4px;">POS</div>
<div class="t gh" style="left:348.5px;top:198.4px;">EMG</div>
<div class="t gh" style="left:371px;top:198.4px;">Non-Print Comments</div>
<div class="t gh" style="left:473.5px;top:198.4px;">ICD Pointers</div>
<div class="t gh" style="left:574.8px;top:198.4px;">24H</div>
<div class="t r gh" style="left:446.6px;top:198.4px;width:100px;">Amt</div>
<div class="t r gh" style="left:471px;top:198.4px;width:100px;">Units</div>
<div class="t r gh" style="left:545.5px;top:198.4px;width:100px;">Total</div>
<div class="t " style="left:15.4px;top:209px;">I</div>
<div class="t " style="left:143px;top:209px;">8/1/12</div>
<div class="t " style="left:177px;top:209px;">8/1/12</div>
<div class="t " style="left:210.7px;top:209px;">99214</div>
<div class="t " style="left:273px;top:209px;">Estb Pt Complex</div>
<div class="t " style="left:325.7px;top:209px;">11</div>
<div class="t " style="left:473.5px;top:209px;">1 2</div>
<div class="t r " style="left:446.6px;top:209px;width:100px;">$75.00</div>
<div class="t r " style="left:471px;top:209px;width:100px;">1</div>
<div class="t r " style="left:545.5px;top:209px;width:100px;">$75.00</div>
<div class="t " style="left:15.4px;top:219.4px;">I</div>
<div class="t " style="left:143px;top:219.4px;">8/1/12</div>
<div class="t " style="left:177px;top:219.4px;">8/1/12</div>
<div class="t " style="left:210.7px;top:219.4px;">93000</div>
<div class="t " style="left:273px;top:219.4px;">EKG</div>
<div class="t " style="left:325.7px;top:219.4px;">11</div>
<div class="t " style="left:473.5px;top:219.4px;">1 2</div>
<div class="t r " style="left:446.6px;top:219.4px;width:100px;">$55.00</div>
<div class="t r " style="left:471px;top:219.4px;width:100px;">1</div>
<div class="t r " style="left:545.5px;top:219.4px;width:100px;">$55.00</div>
<div class="a" style="left:5.3px;top:221.1px;width:0;height:0;border-top:2.4px solid transparent;border-bottom:2.4px solid transparent;border-left:3.2px solid #111"></div>
<div class="a " style="left:1.5px;top:261px;width:646.2px;height:9px;background:#fbdcb8;border:1px solid #d2ac84"></div>
<div class="a " style="left:548px;top:262px;width:0.7px;height:7.5px;background:#d2ac84"></div>
<div class="a " style="left:573px;top:262px;width:0.7px;height:7.5px;background:#d2ac84"></div>
<div class="a " style="left:596px;top:262px;width:0.7px;height:7.5px;background:#d2ac84"></div>
<div class="t r " style="left:471px;top:262.3px;width:100px;color:#111"><b>2</b></div>
<div class="t r " style="left:545.5px;top:262.3px;width:100px;color:#111"><b>$130.00</b></div>
<div class="a pn" style="left:1.5px;top:270.3px;width:247.5px;height:52.5px;border-color:#b5cbe8;background:#dbe7f8"></div>
<div class="ck" style="left:6px;top:274.5px"></div>
<div class="t dk" style="left:16px;top:274.5px;">Print To CMS Paper</div>
<div class="ck" style="left:6px;top:286.7px"></div>
<div class="t dk" style="left:16px;top:286.7px;">Do Not Process</div>
<div class="ck on" style="left:6px;top:298.5px"></div>
<div class="t dk" style="left:16px;top:298.5px;">Outside Labs [20]</div>
<div class="ck on" style="left:6px;top:310.3px"></div>
<div class="t dk" style="left:16px;top:310.3px;">Accept Assignment? [27]</div>
<div class="t dk" style="left:90.4px;top:274.5px;">S-Bill Comments</div>
<div class="a " style="left:89.4px;top:284.4px;width:155.1px;height:34.6px;background:#efefee;border:1px solid #cfd4db"></div>
<div class="a " style="left:238px;top:285px;width:6px;height:33.5px;background:#f3f3f3"></div>
<div class="a tru" style="left:239.6px;top:289px"></div>
<div class="a tri" style="left:239.6px;top:312.5px"></div>
<div class="a pn" style="left:252px;top:270.3px;width:396px;height:52.5px;border-color:#b5cbe8;background:#dbe7f8"></div>
<div class="t dk" style="left:256.4px;top:274.6px;">[31]</div>
<div class="cb big" style="left:270px;top:272.45px;width:81px;height:11.3px;"><span>Guss, Casey - (General</span><i></i></div>
<div class="t dk" style="left:355.6px;top:274.6px;">[32]</div>
<div class="cb big" style="left:370.3px;top:272.45px;width:82.2px;height:11.3px;"><span>&nbsp;Acrendo Medical Softwa</span><i></i></div>
<div class="t dk" style="left:459px;top:273.6px;">[33]</div>
<div class="cb big" style="left:471.8px;top:272.45px;width:96.6px;height:11.3px;"><span>&nbsp;Acrendo Medical Software</span><i></i></div>
<div class="in" style="left:270px;top:284.15px;width:81px;height:11.3px;background:#e6eaf0;border-color:#e6eaf0"><span>Casey Guss</span></div>
<div class="t dk" style="left:256.4px;top:298.3px;">[25]</div>
<div class="in" style="left:270px;top:296.15px;width:29px;height:11.3px;background:#eef1f5"><span>26123123</span></div>
<div class="rd" style="left:307.5px;top:299.8px"></div>
<div class="t " style="left:317px;top:299.3px;letter-spacing:.5px;color:#3d4a63">SSN</div>
<div class="rd on" style="left:331.8px;top:299.8px"></div>
<div class="t " style="left:341.4px;top:299.3px;letter-spacing:.5px;color:#3d4a63">EIN</div>
<div class="in" style="left:370.3px;top:284.15px;width:82.2px;height:11.3px;"><span>Acrendo Medical Software</span></div>
<div class="in" style="left:370.3px;top:296.15px;width:82.2px;height:11.3px;"><span>3737 Ruffin Road</span></div>
<div class="in" style="left:370.3px;top:308.35px;width:98.2px;height:11.3px;"><span>San Diego</span></div>
<div class="cb gcb" style="left:405px;top:308.6px;width:25px;height:10.8px;"><span>CA</span><i></i></div>
<div class="in" style="left:429.5px;top:308.7px;width:39px;height:10.6px;border-color:transparent;background:transparent"><span>33103</span></div>
<div class="in" style="left:471.8px;top:284.15px;width:96.6px;height:11.3px;"><span>5520 Ruffin Rd # 201</span></div>
<div class="in" style="left:471.8px;top:296.15px;width:96.6px;height:11.3px;"><span>SAN DIEGC</span></div>
<div class="cb gcb" style="left:507.4px;top:296.4px;width:23.1px;height:10.8px;"><span>CA</span><i></i></div>
<div class="in" style="left:530.6px;top:296.5px;width:37.8px;height:10.6px;border-color:transparent;background:transparent"><span>92128</span></div>
<div class="in" style="left:471.8px;top:308.35px;width:96.6px;height:11.3px;"><span>(858) 681-1500</span></div>
<div class="a " style="left:1px;top:323.3px;width:648px;height:10.7px;background:#dfeaf9;border-top:1px solid #a9c3e6"></div>
<div class="a btn" style="left:6.3px;top:324.8px;width:8px;height:7.6px;background:#fbfcfd;border-color:#9aa3b0"><span class="a" style="left:1.500px;top:2.400px;width:3.400px;height:.900px;background:#222"></span><span class="a" style="left:2.750px;top:1.150px;width:.900px;height:3.400px;background:#222"></span></div>
<div class="a hd" style="left:1.5px;top:334.6px;width:311px;height:13.4px;background:linear-gradient(#e9f1fb,#d3e2f5)"></div>
<div class="t dk" style="left:7px;top:338.4px;">Account Notes</div>
<div class="a " style="left:52px;top:336px;width:227px;height:10.3px;background:#fff"></div>
<div class="a btn" style="left:281.6px;top:336.3px;width:10px;height:10px;background:linear-gradient(#eef4fc,#dbe7f7);border-color:#b3c7e4"><span class="a" style="left:3.6px;top:3.6px;width:1.8px;height:1.6px;background:#333"></span></div>
<div class="a btn" style="left:295.7px;top:336.3px;width:11.3px;height:10px;background:linear-gradient(#eef4fc,#dbe7f7);border-color:#b3c7e4"><span class="a" style="left:1.600px;top:.6px;width:7.200px;height:7.200px;border-radius:50%;background:radial-gradient(circle at 40% 35%,#f08080,#d11f24 60%)"></span><span class="a" style="left:3px;top:3.600px;width:4.400px;height:1.300px;background:#fff;border-radius:.5px"></span></div>
<div class="a " style="left:2px;top:348px;width:311px;height:89px;background:#fff;border:1px solid #9fb3d1"></div>
<div class="a " style="left:3px;top:349px;width:309px;height:9.7px;background:linear-gradient(#fff,#f0f2f4);border-bottom:1px solid #e1e4e8"></div>
<div class="t gh" style="left:12.9px;top:350.5px;">DOS</div>
<div class="t gh" style="left:66px;top:350.5px;">Note</div>
<div class="t gh" style="left:123.8px;top:350.5px;">User</div>
<div class="t gh" style="left:180.7px;top:350.5px;">Create Dt</div>
<div class="t gh" style="left:237.9px;top:350.5px;">Create Ti</div>
<div class="t gh" style="left:290.4px;top:350.5px;">Module</div>
<div class="a " style="left:3px;top:427px;width:309px;height:9px;background:#f0f1f3"></div>
<div class="a " style="left:15.5px;top:428px;width:256px;height:7px;background:linear-gradient(#f5f5f6,#d8dade);border:1px solid #a9aeb6;border-radius:2px"></div>
<div class="t " style="left:142px;top:427.9px;font-size:3px;color:#666;letter-spacing:.2px">III</div>
<div class="a" style="left:8px;top:430px;width:0;height:0;border-top:1.5px solid transparent;border-bottom:1.5px solid transparent;border-right:2px solid #333"></div>
<div class="a" style="left:306.5px;top:430px;width:0;height:0;border-top:1.5px solid transparent;border-bottom:1.5px solid transparent;border-left:2px solid #333"></div>
<div class="a " style="left:3.3px;top:426px;width:1px;height:11px;background:#333"></div>
<div class="a " style="left:312.2px;top:334.3px;width:336.3px;height:11.4px;background:linear-gradient(#fff,#f6f7f8 50%,#e9ebee);border:1px solid #c9ced6;border-left:1.200px solid #6b7380;border-top-color:#8f97a3"></div>
<div class="t gh" style="left:348.5px;top:337.5px;">Alerts</div>
<div class="a " style="left:312.2px;top:345.7px;width:336.3px;height:91.3px;background:#fff;border:1px solid #b9c3d2;border-top:none;border-left:1.200px solid #6b7380"></div>
</div>
<!-- SHORTCUT BAR -->
<div id="sc" class="a" style="left:0;top:437px;width:650px;height:14.5px;background:linear-gradient(#c6daf4,#b6cff0)">
<div class="sk" style="left:3px"><b>Esc</b>/ Close</div><div class="sk" style="left:50.4px"><b>N</b>/ New Row</div><div class="sk" style="left:103px"><b>A</b>/ Apply</div><div class="sk" style="left:143.5px"><b>U</b>/ CMS Queue</div><div class="sk" style="left:201px"><b>H</b>/ History</div><div class="sk" style="left:245.700px"><b>E</b>/ EMR</div><div class="sk" style="left:284.700px"><b>I</b>/ Insurance</div><div class="sk" style="left:333.500px"><b>R</b>/ Provider</div><div class="sk" style="left:382px"><b>D</b>/ Dupe Row</div><div class="sk" style="left:437.200px"><b>T</b>/ CPT</div>
</div>
<!-- STATUS BAR -->
<div id="st" class="a" style="left:0;top:451.5px;width:650px;height:13.5px;background:linear-gradient(#b0ccf4,#a3c3f1)">
<div class="a" style="left:5.200px;top:2px;width:6.400px;height:8.800px;border-radius:2.600px;background:linear-gradient(90deg,#d9b81a,#f8e86a 45%,#c9a412);border:.9px solid #6f6426"></div>
<div class="sk" style="left:15.200px;top:3px;color:#2a3f6e;font-size:6.650px">casey @ AIMed/[DEMOPC1\SQLEXPRESS]</div>
<div class="sk" style="right:5px;top:3px;color:#2a3f6e;font-size:6.800px;transform-origin:100% 50%">Used: 578 MB | Free: 6,496 MB</div>
</div>
</div>
</body>
</html>
